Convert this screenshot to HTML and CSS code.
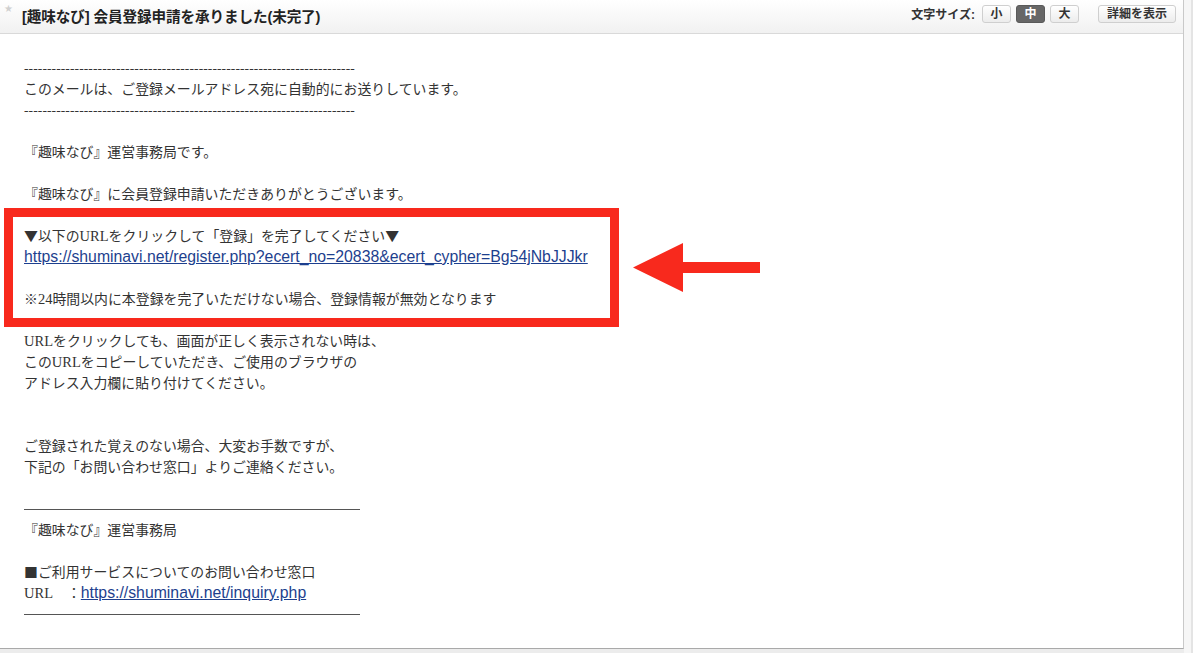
FILE: index.html
```html
<!DOCTYPE html>
<html lang="ja">
<head>
<meta charset="utf-8">
<title>[趣味なび] 会員登録申請を承りました(未完了)</title>
<link rel="stylesheet" href="styles.css">
</head>
<body>
<div class="page">
  <div class="mail">
    <div class="mail-head">
      <span class="star">★</span>
      <h1 class="subject">[趣味なび] 会員登録申請を承りました(未完了)</h1>
      <div class="spacer"></div>
      <span class="size-label">文字サイズ:</span>
      <div class="size-group">
        <span class="btn size">小</span>
        <span class="btn size active">中</span>
        <span class="btn size">大</span>
      </div>
      <span class="btn detail">詳細を表示</span>
    </div>
    <div class="mail-body">
      <p class="para"><span class="dashes">------------------------------------------------------------------------</span><br>このメールは、ご登録メールアドレス宛に自動的にお送りしています。<br><span class="dashes">------------------------------------------------------------------------</span></p>
      <p class="para">『趣味なび』運営事務局です。</p>
      <p class="para">『趣味なび』に会員登録申請いただきありがとうございます。</p>
      <p class="para"><span class="mark">▼</span>以下の<span class="latin">URL</span>をクリックして「登録」を完了してください<span class="mark">▼</span><br><a class="link" href="#">https://shuminavi.net/register.php?ecert_no=20838&amp;ecert_cypher=Bg54jNbJJJkr</a></p>
      <p class="para">※<span class="latin">24</span>時間以内に本登録を完了いただけない場合、登録情報が無効となります</p>
      <p class="para gap2"><span class="latin">URL</span>をクリックしても、画面が正しく表示されない時は、<br>この<span class="latin">URL</span>をコピーしていただき、ご使用のブラウザの<br>アドレス入力欄に貼り付けてください。</p>
      <p class="para">ご登録された覚えのない場合、大変お手数ですが、<br>下記の「お問い合わせ窓口」よりご連絡ください。</p>
      <div class="rule"></div>
      <p class="para">『趣味なび』運営事務局</p>
      <p class="para tight"><span class="mark">■</span>ご利用サービスについてのお問い合わせ窓口<br><span class="latin">URL</span>　：<a class="link" href="#">https://shuminavi.net/inquiry.php</a></p>
      <div class="rule"></div>
    </div>
    <div class="highlight"></div>
    <svg class="arrow" width="135" height="56" viewBox="0 0 135 56" xmlns="http://www.w3.org/2000/svg">
      <polygon points="3,27.5 53,3 53,22 130,22 130,33 53,33 53,52" fill="#f8291d"/>
    </svg>
  </div>
  <div class="side"></div>
</div>
</body>
</html>
```

FILE: styles.css
```css
html, body {
  margin: 0;
  padding: 0;
}
body {
  background: #ececec;
  width: 1193px;
  height: 653px;
  overflow: hidden;
}
.page {
  display: flex;
  height: 653px;
}
.mail {
  position: relative;
  width: 1183px;
  height: 648px;
  background: #fff;
  border-right: 1px solid #c9c9c9;
  border-bottom: 1px solid #a9a9a9;
  overflow: hidden;
  flex: none;
}
.side {
  flex: 1;
  height: 653px;
  background: #f6f6f6;
  border-right: 2px solid #e4e4e4;
}
.mail-head {
  height: 33px;
  border-bottom: 1px solid #d9d9d9;
  background: linear-gradient(#ffffff, #f1f1f1);
  display: flex;
  align-items: center;
  padding: 0 7px 0 4px;
  font-family: "Liberation Sans", "Noto Sans CJK JP", sans-serif;
}
.star {
  color: #d0d0d0;
  font-size: 10px;
  width: 18px;
  margin-top: -16px;
  font-family: "DejaVu Sans", sans-serif;
}
.subject {
  margin: 0;
  font-size: 14.6px;
  font-weight: bold;
  color: #222;
  margin-top: -2px;
  letter-spacing: -0.1px;
}
.spacer {
  flex: 1;
}
.size-label {
  font-size: 12px;
  font-weight: bold;
  color: #333;
  margin-right: 7px;
  margin-top: -6px;
}
.size-group {
  display: flex;
  gap: 5px;
  margin-top: -6px;
}
.btn {
  box-sizing: border-box;
  height: 18px;
  line-height: 16px;
  font-size: 12px;
  font-weight: bold;
  color: #333;
  border: 1px solid #cfcfcf;
  border-radius: 3px;
  background: linear-gradient(#ffffff, #ececec);
  text-align: center;
}
.size {
  width: 29px;
}
.size.active {
  background: #676767;
  border-color: #5a5a5a;
  color: #fff;
}
.detail {
  margin-left: 19px;
  padding: 0 8px;
  margin-top: -6px;
}
.mail-body {
  padding: 24px 0 0 24px;
  font-family: "Liberation Serif", "Noto Sans CJK JP", serif;
  font-size: 13.9px;
  line-height: 21px;
  color: #333;
}
.para {
  margin: 0 0 21px;
}
.para.gap2 {
  margin-bottom: 42px;
}
.para.tight {
  margin-bottom: 0;
}
.dashes {
  display: inline-block;
  white-space: nowrap;
  font-size: 13.5px;
  letter-spacing: 0.1px;
}
.latin {
  font-size: 14.5px;
  line-height: 1;
}
.mark {
  font-family: "Noto Sans CJK JP", sans-serif;
  line-height: 1;
}
.link {
  font-family: "Liberation Sans", "Noto Sans CJK JP", sans-serif;
  font-size: 15.8px;
  line-height: 1;
  color: #1d3f8e;
  text-decoration: underline;
}
.rule {
  width: 336px;
  height: 21px;
  background: linear-gradient(#555, #555) center / 100% 1px no-repeat;
}
.highlight {
  position: absolute;
  left: 4px;
  top: 208px;
  width: 615px;
  height: 119px;
  box-sizing: border-box;
  border: 9px solid #f8291d;
}
.arrow {
  position: absolute;
  left: 630px;
  top: 240px;
}
```
